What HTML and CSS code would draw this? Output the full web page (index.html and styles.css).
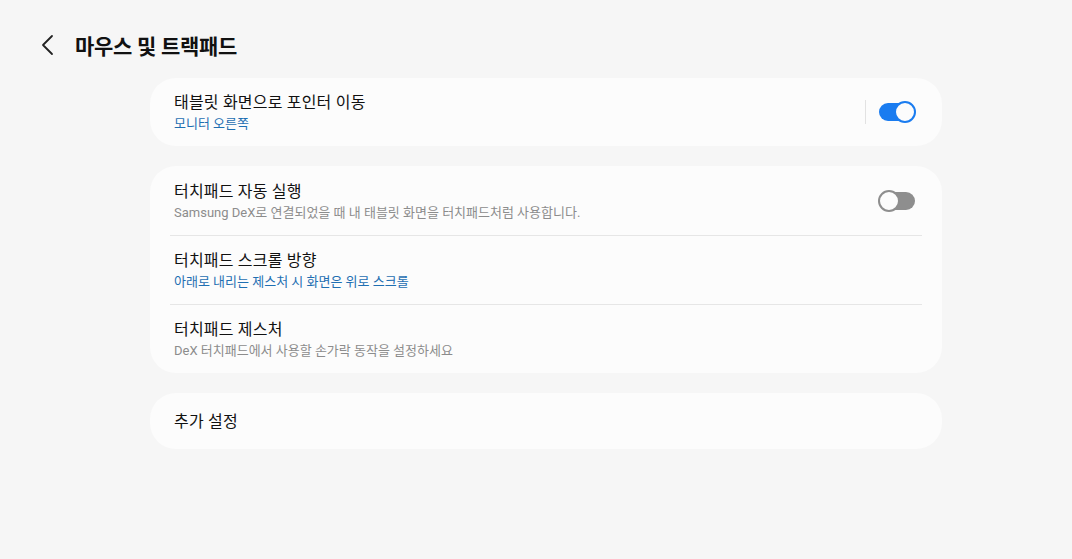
FILE: index.html
```html
<!DOCTYPE html>
<html lang="ko">
<head>
    <meta charset="UTF-8">
    <meta name="viewport" content="width=device-width, initial-scale=1.0">
    <title>마우스 및 트랙패드</title>
    <link rel="stylesheet" href="styles.css">
</head>
<body>
    <header class="top-bar">
        <button class="back" type="button" aria-label="뒤로">
            <svg width="16" height="22" viewBox="0 0 16 22">
                <path d="M12 2 L3 11 L12 20" fill="none" stroke="#222" stroke-width="1.8" stroke-linecap="round" stroke-linejoin="round"/>
            </svg>
        </button>
        <h1>마우스 및 트랙패드</h1>
    </header>

    <main class="list">
        <section class="card">
            <div class="row">
                <div class="text">
                    <div class="title">태블릿 화면으로 포인터 이동</div>
                    <div class="sub blue">모니터 오른쪽</div>
                </div>
                <span class="vline"></span>
                <span class="switch on"><span class="knob"></span></span>
            </div>
        </section>

        <section class="card">
            <div class="row">
                <div class="text">
                    <div class="title">터치패드 자동 실행</div>
                    <div class="sub">Samsung DeX로 연결되었을 때 내 태블릿 화면을 터치패드처럼 사용합니다.</div>
                </div>
                <span class="switch off"><span class="knob"></span></span>
            </div>
            <div class="row">
                <div class="text">
                    <div class="title">터치패드 스크롤 방향</div>
                    <div class="sub blue">아래로 내리는 제스처 시 화면은 위로 스크롤</div>
                </div>
            </div>
            <div class="row">
                <div class="text">
                    <div class="title">터치패드 제스처</div>
                    <div class="sub">DeX 터치패드에서 사용할 손가락 동작을 설정하세요</div>
                </div>
            </div>
        </section>

        <section class="card">
            <div class="row single">
                <div class="title">추가 설정</div>
            </div>
        </section>
    </main>
</body>
</html>
```

FILE: styles.css
```css
body {
    margin: 0;
    background: #f6f6f6;
    font-family: Roboto, "Noto Sans CJK KR", sans-serif;
    color: #111;
}

.top-bar {
    display: flex;
    align-items: center;
    height: 90px;
    padding-left: 40px;
}

.back {
    border: none;
    background: none;
    padding: 0;
    width: 35px;
    height: 22px;
    display: flex;
    align-items: center;
    cursor: pointer;
}

h1 {
    margin: 0;
    font-size: 21px;
    font-weight: bold;
    letter-spacing: -0.3px;
}

.list {
    width: 792px;
    margin: -12px 0 0 150px;
    display: flex;
    flex-direction: column;
    gap: 20px;
}

.card {
    background: #fcfcfc;
    border-radius: 26px;
    padding: 0 20px;
}

.row {
    box-sizing: border-box;
    display: flex;
    align-items: center;
    height: 69px;
    padding: 0 4px;
    border-top: 1px solid #e6e6e6;
}

.card .row:first-child {
    border-top: none;
}

.card:first-child .row {
    height: 68px;
}

.row.single {
    height: 56px;
}

.text {
    flex: 1;
    display: flex;
    flex-direction: column;
    gap: 2px;
}

.title {
    font-size: 16px;
    line-height: 21px;
    letter-spacing: 0.2px;
}

.sub {
    font-size: 13px;
    line-height: 17px;
    color: #8c8c8c;
}

.sub.blue {
    color: #1f6fb2;
}

.vline {
    width: 1px;
    height: 24px;
    background: #e2e2e2;
    margin-right: 13px;
}

.switch {
    position: relative;
    width: 36px;
    height: 18px;
    border-radius: 9px;
    margin-right: 3px;
}

.switch.on {
    background: #1a7cf0;
}

.switch.off {
    background: #8e8e8e;
}

.knob {
    position: absolute;
    top: -2px;
    width: 18px;
    height: 18px;
    border-radius: 50%;
    background: #fcfcfc;
}

.switch.on .knob {
    right: -1px;
    border: 2px solid #1a7cf0;
}

.switch.off .knob {
    left: -1px;
    border: 2px solid #8e8e8e;
}
```
